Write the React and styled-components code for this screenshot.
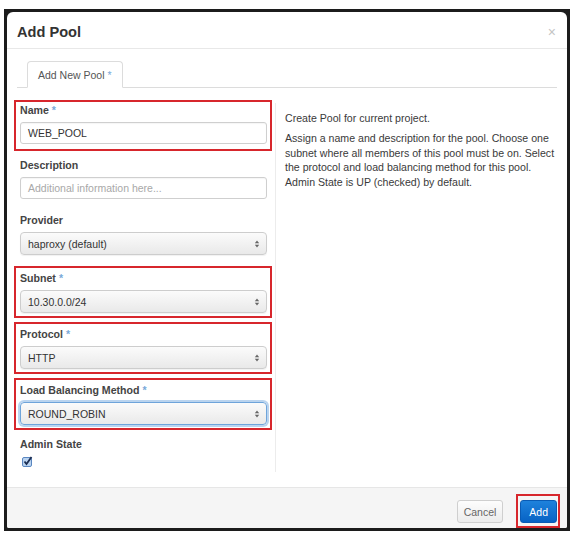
import React from "react";
import styled, { createGlobalStyle, css } from "styled-components";

const Global = createGlobalStyle`
  html, body { margin: 0; padding: 0; background: #fff; }
  body { font-family: "Liberation Sans", Arial, sans-serif; color: #333; }
  * { box-sizing: border-box; }
`;

const Page = styled.div`
  width: 577px;
  height: 542px;
  padding: 9px 7px 11px 4px;
`;

const Frame = styled.div`
  width: 566px;
  height: 522px;
  background: #1c1c1c;
  padding: 3px;
`;

const Modal = styled.div`
  width: 100%;
  height: 100%;
  background: #fff;
  border-radius: 6px 6px 2px 2px;
  display: flex;
  flex-direction: column;
  overflow: hidden;
`;

const Header = styled.div`
  height: 37px;
  flex: none;
  display: flex;
  align-items: center;
  justify-content: space-between;
  padding: 0 11px 0 10px;
  border-bottom: 1px solid #e8e8e8;
`;

const Title = styled.h3`
  margin: 0;
  font-size: 14.6px;
  font-weight: 700;
  color: #333;
  padding-top: 3px;
`;

const Close = styled.span`
  font-size: 14px;
  color: #c4c4c4;
  line-height: 1;
  padding-top: 3px;
`;

const Body = styled.div`
  flex: 1;
  padding: 12px 10px 0 10px;
  display: flex;
  flex-direction: column;
`;

const TabBar = styled.div`
  display: flex;
  padding-left: 10px;
  border-bottom: 1px solid #dcdcdc;
`;

const Tab = styled.div`
  height: 27px;
  margin-bottom: -1px;
  padding: 0 10px;
  display: flex;
  align-items: center;
  border: 1px solid #dcdcdc;
  border-bottom-color: #fff;
  border-radius: 4px 4px 0 0;
  background: #fff;
  font-size: 10.5px;
  color: #555;
`;

const Star = styled.span`
  color: #7aa9d9;
  margin-left: 3px;
`;

const Columns = styled.div`
  display: grid;
  grid-template-columns: 259px 1fr;
  margin: 15px -8px 0 0;
`;

const LeftCol = styled.div`
  padding: 0 8px 0 3px;
  border-right: 1px solid #ececec;
  display: flex;
  flex-direction: column;
`;

const RightCol = styled.div`
  padding: 8px 0 0 9px;
  font-size: 10.6px;
  line-height: 14.6px;
  color: #3a3a3a;
`;

const Para = styled.p`
  margin: 0 0 5.5px;
  max-width: 272px;
`;

const marker = css`
  position: relative;
  &::after {
    content: "";
    position: absolute;
    border: 2px solid #d7262c;
    pointer-events: none;
  }
`;

const Group = styled.div`
  margin-bottom: ${(p) => p.$space ?? 14}px;
  ${(p) =>
    p.$marked &&
    css`
      ${marker}
      &::after {
        inset: ${p.$first ? "-3px -5px -7px -6px" : "-5px -5px -5px -6px"};
      }
    `}
`;

const Label = styled.div`
  font-size: 10.6px;
  font-weight: 700;
  color: #444;
  line-height: 15px;
  margin-bottom: 4px;
`;

const Input = styled.div`
  height: 22px;
  border: 1px solid #cfcfcf;
  border-radius: 3px;
  display: flex;
  align-items: center;
  padding: 0 7px;
  font-size: 10.5px;
  color: ${(p) => (p.$placeholder ? "#a8a8a8" : "#333")};
  box-shadow: inset 0 1px 1px rgba(0, 0, 0, 0.04);
`;

const Select = styled.div`
  height: 23px;
  border: 1px solid ${(p) => (p.$focus ? "#6ea4da" : "#cdcdcd")};
  border-radius: 4px;
  display: flex;
  align-items: center;
  justify-content: space-between;
  padding: 0 6px 0 7px;
  font-size: 10.5px;
  color: #333;
  background: linear-gradient(#fbfbfb, #e9e9e9);
  box-shadow: ${(p) =>
    p.$focus ? "0 0 0 2px rgba(102, 160, 220, 0.45)" : "0 1px 1px rgba(0,0,0,0.06)"};
`;

const Arrows = () => (
  <svg width="6" height="10" viewBox="0 0 6 10">
    <path d="M3 1.5 L5.2 4.2 L0.8 4.2 Z" fill="#666" />
    <path d="M3 8.5 L5.2 5.8 L0.8 5.8 Z" fill="#666" />
  </svg>
);

const CheckBox = styled.div`
  margin-top: 1px;
  margin-left: 2px;
  width: 11px;
  height: 11px;
  display: flex;
`;

const CheckIcon = () => (
  <svg width="11" height="11" viewBox="0 0 11 11">
    <rect x="0.5" y="1.5" width="9" height="9" rx="1.5" fill="#b9d3f0" stroke="#5a86c0" />
    <path d="M2.5 5.5 L4.5 8 L9.5 1" fill="none" stroke="#1b2d52" strokeWidth="1.8" />
  </svg>
);

const Footer = styled.div`
  flex: none;
  height: 41px;
  border-top: 1px solid #e6e6e6;
  background: #f5f5f5;
  display: flex;
  justify-content: flex-end;
  align-items: flex-start;
  gap: 17px;
  padding: 12px 10px 0 0;
`;

const Button = styled.div`
  height: 23px;
  display: flex;
  align-items: center;
  border-radius: 3px;
  font-size: 10.5px;
  ${(p) =>
    p.$primary
      ? css`
          padding: 0 8px;
          color: #fff;
          border: 1px solid #0a5bb4;
          background: linear-gradient(#1e82dc, #0762c4);
        `
      : css`
          padding: 0 6px;
          color: #666;
          border: 1px solid #cfcfcf;
          background: linear-gradient(#fdfdfd, #ececec);
        `}
  ${(p) =>
    p.$marked &&
    css`
      ${marker}
      &::after {
        inset: -7px -4px -6px -5px;
      }
    `}
`;

const FieldLabel = ({ children, required }) => (
  <Label>
    {children}
    {required && <Star>*</Star>}
  </Label>
);

export default function App() {
  return (
    <>
      <Global />
      <Page>
        <Frame>
          <Modal>
            <Header>
              <Title>Add Pool</Title>
              <Close>×</Close>
            </Header>
            <Body>
              <TabBar>
                <Tab>
                  Add New Pool<Star>*</Star>
                </Tab>
              </TabBar>
              <Columns>
                <LeftCol>
                  <Group $marked $first>
                    <FieldLabel required>Name</FieldLabel>
                    <Input>WEB_POOL</Input>
                  </Group>
                  <Group>
                    <FieldLabel>Description</FieldLabel>
                    <Input $placeholder>Additional information here...</Input>
                  </Group>
                  <Group $space={16}>
                    <FieldLabel>Provider</FieldLabel>
                    <Select>
                      haproxy (default)
                      <Arrows />
                    </Select>
                  </Group>
                  <Group $marked>
                    <FieldLabel required>Subnet</FieldLabel>
                    <Select>
                      10.30.0.0/24
                      <Arrows />
                    </Select>
                  </Group>
                  <Group $marked>
                    <FieldLabel required>Protocol</FieldLabel>
                    <Select>
                      HTTP
                      <Arrows />
                    </Select>
                  </Group>
                  <Group $marked $space={12}>
                    <FieldLabel required>Load Balancing Method</FieldLabel>
                    <Select $focus>
                      ROUND_ROBIN
                      <Arrows />
                    </Select>
                  </Group>
                  <Group $space={5}>
                    <FieldLabel>Admin State</FieldLabel>
                    <CheckBox>
                      <CheckIcon />
                    </CheckBox>
                  </Group>
                </LeftCol>
                <RightCol>
                  <Para>Create Pool for current project.</Para>
                  <Para>
                    Assign a name and description for the pool. Choose one subnet where all
                    members of this pool must be on. Select the protocol and load balancing
                    method for this pool. Admin State is UP (checked) by default.
                  </Para>
                </RightCol>
              </Columns>
            </Body>
            <Footer>
              <Button>Cancel</Button>
              <Button $primary $marked>
                Add
              </Button>
            </Footer>
          </Modal>
        </Frame>
      </Page>
    </>
  );
}
